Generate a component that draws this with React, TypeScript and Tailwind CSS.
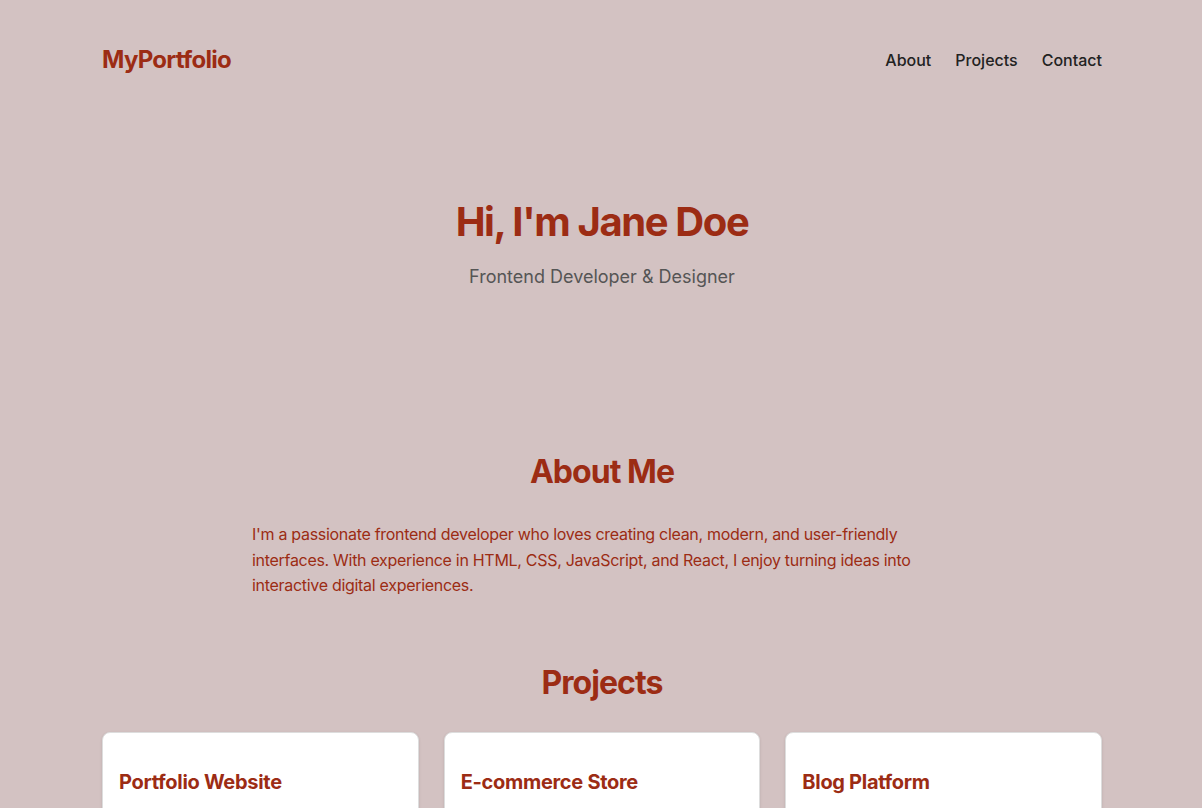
const projects = ["Portfolio Website", "E-commerce Store", "Blog Platform"];

export default function App() {
  return (
    <div className="min-h-screen bg-[#d3c2c2] font-['Inter','Noto_Sans',sans-serif] text-[#9c2c14]">
      <div className="w-full pl-[102px] pr-[100px]">
        <header className="flex items-center justify-between pt-11">
          <a className="text-2xl font-bold leading-8 tracking-[-0.03em]">MyPortfolio</a>
          <nav className="flex gap-6 text-base font-medium text-[#222]">
            <a>About</a>
            <a>Projects</a>
            <a>Contact</a>
          </nav>
        </header>

        <section className="pt-[122px] pb-[100px] text-center">
          <h1 className="text-[40px] font-bold leading-[48px] tracking-[-0.035em]">Hi, I'm Jane Doe</h1>
          <p className="mt-[17px] text-lg text-[#555]">Frontend Developer &amp; Designer</p>
        </section>

        <section className="pt-[61px]">
          <h2 className="text-center text-[32px] font-bold leading-10 tracking-[-0.03em]">About Me</h2>
          <p className="mx-auto mt-[30px] w-[700px] text-base leading-[25.6px] tracking-[-0.3px]">
            I'm a passionate frontend developer who loves creating clean, modern, and user-friendly interfaces. With experience in HTML, CSS, JavaScript, and React, I enjoy turning ideas into interactive digital experiences.
          </p>
        </section>

        <section className="pt-[64px]">
          <h2 className="text-center text-[32px] font-bold leading-10 tracking-[-0.03em]">Projects</h2>
          <div className="mt-[29px] grid grid-cols-3 gap-[25px]">
            {projects.map((p) => (
              <div key={p} className="h-[200px] rounded-lg border border-[#ddd] bg-white px-4 pt-[35px] shadow-sm">
                <h3 className="text-xl font-bold leading-7 tracking-[-0.3px]">{p}</h3>
              </div>
            ))}
          </div>
        </section>
      </div>
    </div>
  );
}
